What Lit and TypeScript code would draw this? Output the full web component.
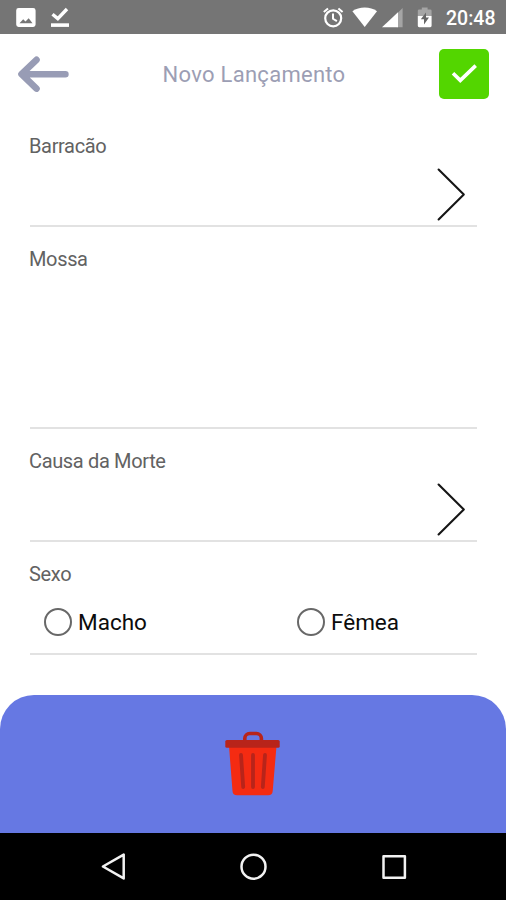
import { LitElement, html, css, nothing } from "lit";
import { customElement, property } from "lit/decorators.js";

@customElement("status-bar")
class StatusBar extends LitElement {
  static styles = css`
    :host { display: flex; justify-content: space-between; height: 34px; background: #757575; }
    svg { display: block; }
    .right { display: flex; }
    .time { width: 60px; font: 500 19.5px/37px Roboto, "Noto Sans", sans-serif; color: #fff; white-space: nowrap; }
  `;
  render() {
    return html`
      <svg width="80" height="34" viewBox="0 0 80 34" fill="#fff">
        <path fill-rule="evenodd" d="M18.6 8h14.600a2.400 2.400 0 0 1 2.400 2.400v14.200a2.400 2.400 0 0 1-2.400 2.400H18.600a2.400 2.400 0 0 1-2.400-2.400V10.400a2.400 2.400 0 0 1 2.400-2.400zM19.500 23.200h13l-3.800-5-3.200 3.300-2.300-2.300z"/>
        <path d="M52.500 14.300l5.300 4.300 9.200-9.600" fill="none" stroke="#fff" stroke-width="3.400"/>
        <path d="M51 23.300h18v3.600H51z"/>
      </svg>
      <div class="right">
        <svg width="126" height="34" viewBox="320 0 126 34" fill="#fff">
          <circle cx="333.200" cy="18.300" r="8" fill="none" stroke="#fff" stroke-width="2.200"/>
          <path d="M333 13.600v5.200l3.900 2.400M323.800 12l4.200-3.600M342.600 12l-4.200-3.600" fill="none" stroke="#fff" stroke-width="2"/>
          <path d="M352.400 11.300C359 6.300 370.500 6.300 377 11.300L364.700 27z"/>
          <path d="M402.600 8v19.200h-6V14z" opacity=".35"/>
          <path d="M398 12.300v14.900h-16z"/>
          <path d="M417.800 16V10.800a1.400 1.400 0 0 1 1.400-1.400h2.600V7.400h5.800v2h2.600a1.400 1.400 0 0 1 1.400 1.400V16z" opacity=".35"/>
          <path d="M417.800 16h13.800v9.800a1.400 1.400 0 0 1-1.400 1.400h-11a1.400 1.400 0 0 1-1.400-1.400z"/>
          <path d="M426 12.500l-5.200 6.800h3.200v5.200l5-7h-3z" fill="#666"/>
        </svg>
        <span class="time">20:48</span>
      </div>
    `;
  }
}

@customElement("page-header")
class PageHeader extends LitElement {
  @property() heading = "";
  static styles = css`
    :host { display: grid; grid-template-columns: 68px 1fr 67px; align-items: center; height: 80px; box-sizing: border-box; }
    svg { display: block; }
    .title { text-align: center; font: 400 22px/30px Roboto, "Noto Sans", sans-serif; letter-spacing: 0.28px; color: #9c9eb4; padding: 1px 0 0 1px; }
    .confirm { width: 50px; height: 50px; border-radius: 5px; background: #53d600; }
  `;
  render() {
    return html`
      <svg width="72" height="80" viewBox="0 34 72 80" fill="none" stroke="#989cb5" stroke-width="6.600" stroke-linecap="round" stroke-linejoin="round">
        <path d="M65.400 74.200H22M36.500 59.800L21.500 74.200l15 14.400"/>
      </svg>
      <div class="title">${this.heading}</div>
      <div class="confirm">
        <svg width="50" height="50" viewBox="439 49 50 50" fill="none" stroke="#fff" stroke-width="3.600">
          <path d="M453 73.200l7.300 7.200 15.400-14.800"/>
        </svg>
      </div>
    `;
  }
}

@customElement("form-field")
class FormField extends LitElement {
  @property() label = "";
  @property({ type: Boolean }) arrow = false;
  static styles = css`
    :host { display: flex; flex-direction: column; box-sizing: border-box; border-bottom: 2px solid #e2e2e2; }
    .label { padding-top: 18px; font: 400 20px/28px Roboto, "Noto Sans", sans-serif; letter-spacing: -0.35px; color: #626262; margin-left: -1px; }
    .arrow { display: block; align-self: flex-end; margin: 7px 10px 0 0; }
  `;
  render() {
    return html`
      <div class="label">${this.label}</div>
      ${this.arrow
        ? html`<svg class="arrow" width="32" height="54" viewBox="0 0 32 54" fill="none" stroke="#161616" stroke-width="2.100" stroke-linecap="round" stroke-linejoin="round"><path d="M3.600 2.500l25.200 25-25.200 25"/></svg>`
        : nothing}
      <slot></slot>
    `;
  }
}

@customElement("radio-option")
class RadioOption extends LitElement {
  @property() label = "";
  static styles = css`
    :host { display: flex; align-items: center; gap: 6px; font: 400 22.500px/30px Roboto, "Noto Sans", sans-serif; color: #0c0c0c; }
    .ring { width: 28px; height: 28px; box-sizing: border-box; border: 2px solid #686868; border-radius: 50%; }
  `;
  render() {
    return html`<span class="ring"></span><span>${this.label}</span>`;
  }
}

@customElement("app-root")
class AppRoot extends LitElement {
  static styles = css`
    :host { display: flex; flex-direction: column; width: 506px; height: 900px; overflow: hidden; background: #fff; }
    .form { flex: 1; display: flex; flex-direction: column; padding: 0 29px 0 30px; }
    .row { height: 113px; }
    .tall { height: 202px; }
    .radios { display: grid; grid-template-columns: 253px 1fr; padding: 19px 0 0 14px; }
    .footer { display: flex; justify-content: center; height: 138px; box-sizing: border-box; padding-top: 33px; background: #6678e3; border-radius: 34px 34px 0 0; }
    .nav { display: flex; justify-content: center; height: 67px; background: #000; }
  `;
  render() {
    return html`
      <status-bar></status-bar>
      <page-header heading="Novo Lançamento"></page-header>
      <div class="form">
        <form-field class="row" label="Barracão" arrow></form-field>
        <form-field class="tall" label="Mossa"></form-field>
        <form-field class="row" label="Causa da Morte" arrow></form-field>
        <form-field class="row" label="Sexo">
          <div class="radios">
            <radio-option label="Macho"></radio-option>
            <radio-option label="Fêmea"></radio-option>
          </div>
        </form-field>
      </div>
      <div class="footer">
        <svg width="60" height="72" viewBox="223 728 60 72">
          <path d="M229 746h47.500l-3.800 45a4.600 4.600 0 0 1-4.600 4.300h-31a4.600 4.600 0 0 1-4.600-4.300z" fill="#f42b12"/>
          <path d="M241 755l2.200 32M253 755v32M265 755l-2.200 32" stroke="#b8241a" stroke-width="3.800" stroke-linecap="round" fill="none"/>
          <path d="M244.800 741v-2.500a5 5 0 0 1 5-5h6.600a5 5 0 0 1 5 5v2.500" stroke="#b8241a" stroke-width="3.600" fill="none"/>
          <rect x="225.300" y="740" width="54.400" height="7.800" rx="1.600" fill="#b8241a"/>
        </svg>
      </div>
      <div class="nav">
        <svg width="506" height="67" viewBox="0 833 506 67" fill="none" stroke="#f2f2f2" stroke-width="2.500" stroke-linejoin="round">
          <path d="M123.700 854.600v23.800l-20.800-11.900z"/>
          <circle cx="253.500" cy="866.700" r="12"/>
          <rect x="383.500" y="856.300" width="21.400" height="21.400"/>
        </svg>
      </div>
    `;
  }
}
